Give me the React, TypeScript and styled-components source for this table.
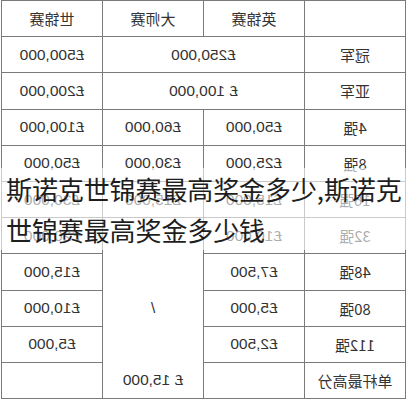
import styled, { createGlobalStyle } from "styled-components";

const Global = createGlobalStyle`
  html, body {
    margin: 0;
    padding: 0;
    background: #fff;
  }
  body {
    width: 407px;
    height: 400px;
    overflow: hidden;
  }
`;

const Page = styled.div`
  position: relative;
  width: 407px;
  height: 400px;
  padding: 0 0 0 1px;
  box-sizing: border-box;
`;

// the screenshot is a mirrored photo of the table
const Table = styled.table`
  width: 405px;
  border-collapse: collapse;
  transform: scaleX(-1);
  font-family: "Liberation Sans", "Noto Sans CJK SC", sans-serif;
  font-size: 15.5px;
  color: #333;
  table-layout: fixed;
`;

const Row = styled.tr`
  height: 36.2px;
`;

const Cell = styled.td`
  border: 1px solid #7a7a7a;
  text-align: center;
  vertical-align: middle;
  padding: 0;
  white-space: nowrap;
`;

const Label = styled(Cell)`
  font-family: "Noto Sans CJK SC", sans-serif;
  font-size: 15px;
`;

const Overlay = styled.div`
  position: absolute;
  left: 0;
  top: 168px;
  width: 407px;
  height: 82px;
  padding-left: 6px;
  box-sizing: border-box;
  background: rgba(255, 255, 255, 0.6);
  font-family: "Noto Sans CJK SC", sans-serif;
  font-size: 26px;
  line-height: 41px;
  color: #1e1e1e;
  letter-spacing: -0.1px;
`;

type Line = [string, ...(string | [string, number, number])[]];

const rows: Line[] = [
  ["冠军", ["£250,000", 2, 1], "£500,000"],
  ["亚军", ["£ 100,000", 2, 1], "£200,000"],
  ["4强", "£50,000", "£60,000", "£100,000"],
  ["8强", "£25,000", "£30,000", "£50,000"],
  ["16强", "£15,000", "£15,000", "£30,000"],
  ["32强", "£10,000", ["/", 1, 5], "£20,000"],
  ["48强", "£7,500", "£15,000"],
  ["80强", "£5,000", "£10,000"],
  ["112强", "£2,500", "£5,000"],
  ["单杆最高分", ["£ 15,000", 3, 1]],
];

export default function App() {
  return (
    <>
      <Global />
      <Page>
        <Table>
          <colgroup>
            <col />
            <col />
            <col />
            <col />
          </colgroup>
          <tbody>
            <Row>
              <Label />
              <Label>英锦赛</Label>
              <Label>大师赛</Label>
              <Label>世锦赛</Label>
            </Row>
            {rows.map(([label, ...cells]) => (
              <Row key={label}>
                <Label>{label}</Label>
                {cells.map((c, i) =>
                  typeof c === "string" ? (
                    <Cell key={i}>{c}</Cell>
                  ) : (
                    <Cell key={i} colSpan={c[1]} rowSpan={c[2]}>
                      {c[0]}
                    </Cell>
                  )
                )}
              </Row>
            ))}
          </tbody>
        </Table>
        <Overlay>
          斯诺克世锦赛最高奖金多少,斯诺克
          <br />
          世锦赛最高奖金多少钱
        </Overlay>
      </Page>
    </>
  );
}
